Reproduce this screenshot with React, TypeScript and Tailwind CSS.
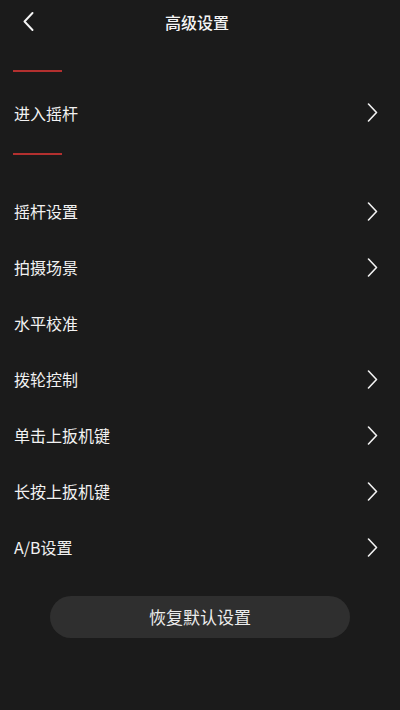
const rows: { label: string; arrow: boolean }[] = [
    { label: "摇杆设置", arrow: true },
    { label: "拍摄场景", arrow: true },
    { label: "水平校准", arrow: false },
    { label: "拨轮控制", arrow: true },
    { label: "单击上扳机键", arrow: true },
    { label: "长按上扳机键", arrow: true },
    { label: "A/B设置", arrow: true },
]

const font = { fontFamily: '"Noto Sans CJK SC", "Noto Sans", sans-serif' }

// thin right chevron, 10x18
const Arrow = () => (
    <svg width="11" height="19" viewBox="0 0 11 19" fill="none" className="text-[#f2f2f2]">
        <polyline points="1.5,1 9.5,9.5 1.5,18" stroke="currentColor" strokeWidth="1.6" strokeLinecap="round" strokeLinejoin="round" />
    </svg>
)

const Row = ({ label, arrow }: { label: string; arrow: boolean }) => (
    <div className="flex h-[56px] items-center justify-between pl-[14px] pr-[22px]">
        <span className="text-[16px] text-[#f2f2f2]">{label}</span>
        {arrow && <Arrow />}
    </div>
)

export default function App() {
    return (
        <div className="flex min-h-[710px] w-full flex-col bg-[#1b1b1b]" style={font}>
            <div className="relative flex h-[44px] items-center justify-center">
                <svg width="11" height="19" viewBox="0 0 11 19" fill="none" className="absolute left-[23px] top-[12px] text-[#f5f5f5]">
                    <polyline points="9.5,1 1.5,9.5 9.5,18" stroke="currentColor" strokeWidth="1.9" strokeLinecap="round" strokeLinejoin="round" />
                </svg>
                <span className="mr-[6px] text-[16px] font-medium text-[#f5f5f5]">高级设置</span>
            </div>

            <div className="ml-[13px] mt-[26px] h-[2px] w-[49px] bg-[#b3302f]" />
            <div className="flex h-[81px] items-center justify-between pl-[14px] pr-[22px]">
                <span className="text-[16px] text-[#f2f2f2]">进入摇杆</span>
                <Arrow />
            </div>
            <div className="ml-[13px] h-[2px] w-[49px] bg-[#b3302f]" />

            <div className="mt-[28px] flex flex-col">
                {rows.map((r) => (
                    <Row key={r.label} label={r.label} arrow={r.arrow} />
                ))}
            </div>

            <div className="mt-[21px] flex justify-center">
                <button className="h-[42px] w-[300px] rounded-full bg-[#2f2f2f] text-[17px] text-[#ececec]">
                    恢复默认设置
                </button>
            </div>
        </div>
    )
}
